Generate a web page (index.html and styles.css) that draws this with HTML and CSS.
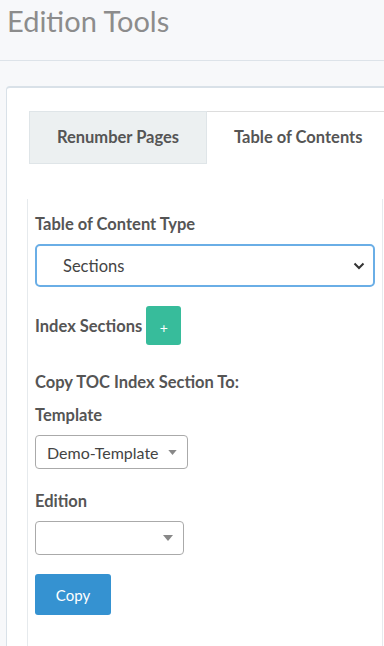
FILE: index.html
```html
<!DOCTYPE html>
<html>
<head>
	<meta charset="utf-8">
	<title>Edition Tools</title>
	<link rel="stylesheet" href="styles.css">
</head>
<body>

<!-- PAGE HEADER -->
<div class="pageHeader">
	<h1>Edition Tools</h1>
</div>

<div class="wrapper">
	<div class="card">

		<ul class="tabs">
			<li class="tab">Renumber Pages</li>
			<li class="tab active">Table of Contents</li>
		</ul>

		<div class="tabPane">
			<label class="fieldLabel first">Table of Content Type</label>
			<div class="selectBox wide">
				<span>Sections</span>
				<svg width="12" height="8" viewBox="0 0 12 8"><path d="M1.5 1.5 L6 6 L10.5 1.5" fill="none" stroke="#333" stroke-width="2"/></svg>
			</div>

			<div class="indexRow">
				<span class="fieldLabel">Index Sections</span>
				<button class="btn btnAdd">+</button>
			</div>

			<label class="fieldLabel copyTitle">Copy TOC Index Section To:</label>

			<label class="fieldLabel">Template</label>
			<div class="selectBox small">
				<span>Demo-Template</span>
				<svg width="9" height="5" viewBox="0 0 10 6"><path d="M0 0 H10 L5 6 Z" fill="#888"/></svg>
			</div>

			<label class="fieldLabel edition">Edition</label>
			<div class="selectBox small empty">
				<span></span>
				<svg width="10" height="6" viewBox="0 0 10 6"><path d="M0 0 H10 L5 6 Z" fill="#888"/></svg>
			</div>

			<button class="btn btnCopy">Copy</button>
		</div>

	</div>
</div>

</body>
</html>
```

FILE: styles.css
```css
html, body {
	margin: 0;
	padding: 0;
	overflow: hidden;
}
body {
	background-color: #f7f8fa;
	font-family: 'Lato', 'Liberation Sans', sans-serif;
	color: #555;
	height: 646px;
}

.pageHeader {
	height: 60px;
	border-bottom: 1px solid #dde3e9;
	padding: 0 7px;
}
.pageHeader h1 {
	margin: 0;
	padding-top: 4px;
	font-size: 29px;
	line-height: 34px;
	font-weight: 400;
	color: #8c8c8c;
}

.wrapper {
	padding: 25px 0 0 6px;
	width: 420px;
}

.card {
	width: 398px;
	height: 600px;
	box-sizing: border-box;
	background-color: white;
	border: 1px solid #d9e1e8;
	border-top-width: 2px;
	border-radius: 4px;
	padding: 23px 20px 0 20px;
}

/* tabs */
.tabs {
	list-style: none;
	margin: 0 0 0 2px;
	padding: 0;
	display: flex;
	height: 53px;
}
.tab {
	box-sizing: border-box;
	height: 53px;
	line-height: 51px;
	font-size: 16.5px;
	font-weight: 700;
	color: #555;
	text-align: center;
	background-color: #ecf0f1;
	border: 1px solid #dfe5e8;
	width: 178px;
	flex-shrink: 0;
}
.tab.active {
	background-color: white;
	border-color: #dddddd;
	border-left: none;
	border-bottom: none;
	width: auto;
	padding: 0 27px;
	white-space: nowrap;
}

.tabPane {
	margin-top: 35px;
	height: 500px;
	border-left: 1px solid #e6eaed;
	border-right: 1px solid #e6eaed;
	padding: 15px 7px 0 7px;
}

.fieldLabel {
	display: block;
	font-size: 16.5px;
	font-weight: 700;
	line-height: 20px;
	color: #555;
	margin-bottom: 10px;
}
.fieldLabel.first {
	margin-bottom: 10px;
}
.copyTitle {
	margin-top: 27px;
	margin-bottom: 13px;
}
.edition {
	margin-top: 22px;
}

/* fake selects */
.selectBox {
	box-sizing: border-box;
	display: flex;
	align-items: center;
	justify-content: space-between;
	background-color: white;
	color: #444;
	font-size: 16.5px;
	border: 1px solid #aaa;
	border-radius: 4px;
}
.selectBox.wide {
	width: 340px;
	height: 43px;
	border: 2px solid #6aaee6;
	border-radius: 5px;
	padding: 0 8px 0 26px;
}
.selectBox.small {
	height: 34px;
	padding: 0 10px 0 11px;
	width: 153px;
}
.selectBox.small span {
	font-size: 16px;
}
.selectBox.small.empty {
	width: 149px;
}

.indexRow {
	display: flex;
	align-items: center;
	gap: 4px;
	margin-top: 19px;
}
.indexRow .fieldLabel {
	margin: 0;
}

.btn {
	border: none;
	color: white;
	font-family: inherit;
	border-radius: 3px;
	cursor: pointer;
}
.btnAdd {
	width: 35px;
	height: 39px;
	background-color: #37bc9b;
	font-size: 14px;
	padding: 3px 0 0 0;
}
.btnCopy {
	margin-top: 19px;
	width: 76px;
	height: 41px;
	background-color: #3592d1;
	font-size: 15px;
}
```
